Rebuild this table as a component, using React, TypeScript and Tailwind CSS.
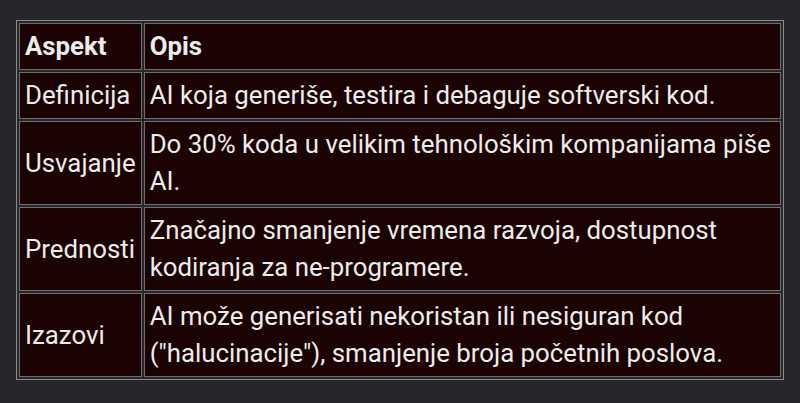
const rows = [
  { aspect: "Definicija", opis: "AI koja generiše, testira i debaguje softverski kod." },
  { aspect: "Usvajanje", opis: "Do 30% koda u velikim tehnološkim kompanijama piše AI." },
  { aspect: "Prednosti", opis: "Značajno smanjenje vremena razvoja, dostupnost kodiranja za ne-programere." },
  { aspect: "Izazovi", opis: "AI može generisati nekoristan ili nesiguran kod (\"halucinacije\"), smanjenje broja početnih poslova." },
];

export default function App() {
  return (
    <div className="min-h-[403px] bg-[#25272b] px-4 pt-5 font-['Roboto',sans-serif] text-[25.8px] leading-[37px] text-[#ececec]">
      <table className="w-full border-separate border-spacing-[2px] border border-[#8a8a8a] text-left">
        <thead>
          <tr>
            <th className="border border-[#6e6e6e] bg-[#1c0303] px-[5px] py-[4px] font-bold">Aspekt</th>
            <th className="border border-[#6e6e6e] bg-[#1c0303] px-[5px] py-[4px] font-bold">Opis</th>
          </tr>
        </thead>
        <tbody>
          {rows.map((r) => (
            <tr key={r.aspect}>
              <td className="border border-[#6e6e6e] bg-[#1c0303] px-[5px] py-[4px] whitespace-nowrap">{r.aspect}</td>
              <td className="border border-[#6e6e6e] bg-[#1c0303] px-[5px] py-[4px]">{r.opis}</td>
            </tr>
          ))}
        </tbody>
      </table>
    </div>
  );
}
